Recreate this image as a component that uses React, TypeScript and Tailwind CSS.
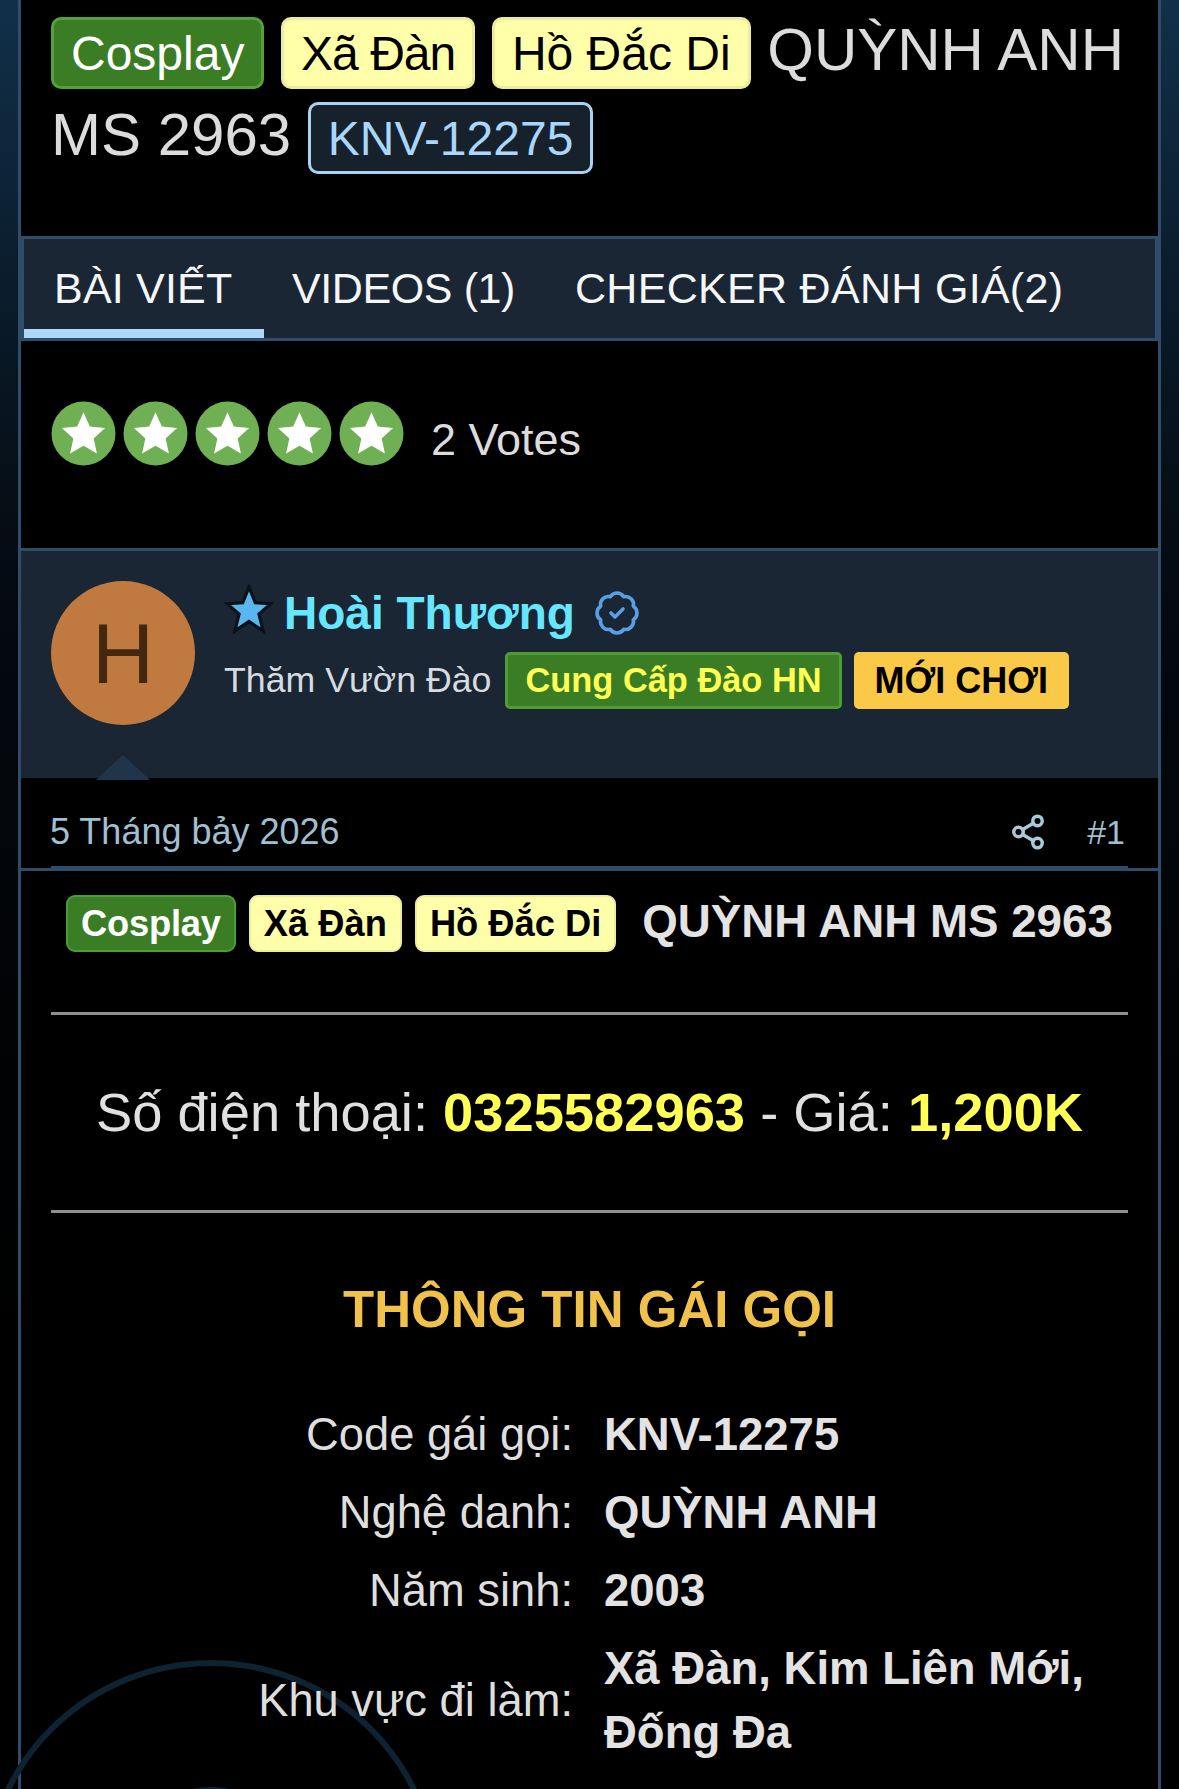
import { BadgeCheck, Share2 } from 'lucide-react';

const titleBadge = 'inline-block h-[72px] rounded-[10px] border-[3px] px-[17px] pt-[2px] align-middle text-[48px] leading-[64px] -translate-y-[1px]';
const postBadge = 'inline-block h-[57px] rounded-[9px] border-[2px] px-[13px] align-middle text-[36.3px] font-bold leading-[53px]';

function RatingStar() {
  return (
    <svg viewBox="0 0 64 64" className="h-[65px] w-[65px]">
      <circle cx="32" cy="32" r="31.5" fill="#70b054" />
      <path d="M32 11l6.2 14 15.1 1.6-11.3 10.2 3.2 14.9L32 44.1l-13.2 7.6L22 36.8 10.7 26.6 25.8 25z" fill="#ffffff" />
    </svg>
  );
}

function InfoRow({ label, children }: { label: string; children: React.ReactNode }) {
  return (
    <div className="flex items-center py-[7px]">
      <div className="w-[553px] pr-[31px] text-right text-[45.3px] text-[#dedede]">{label}</div>
      <div className="w-[480px] font-bold text-[#e3e3e3]">{children}</div>
    </div>
  );
}

export default function App() {
  return (
    <div className="relative flex h-[1789px] w-[1179px] overflow-hidden bg-black font-['Liberation_Sans',Arial,sans-serif]">
      <div className="h-full w-[18px] shrink-0 bg-gradient-to-b from-[#11304a] via-[#050c13] via-30% to-black" />
      <div className="relative flex h-full w-[1143px] shrink-0 flex-col border-x-[3px] border-[#2f4d6b]">
        {/* background rings */}
        <div className="absolute left-[-39px] top-[1660px] h-[458px] w-[458px] rounded-full border-[6px] border-[#0d2331]" />
        <div className="absolute left-[100px] top-[1787px] h-[180px] w-[180px] rounded-full border-[4px] border-[#0d2331]" />

        <h1 className="relative m-0 h-[236px] shrink-0 px-[30px] pt-[7px] text-[60px] font-normal leading-[85px] text-[#dcdcdc]">
          <span className={`${titleBadge} border-[#55a23a] bg-[#3a7d25] text-white`}>Cosplay</span>{' '}
          <span className={`${titleBadge} border-[#ecec9c] bg-[#ffffaa] tracking-[-1px] text-black`}>Xã Đàn</span>{' '}
          <span className={`${titleBadge} border-[#ecec9c] bg-[#ffffaa] text-black`}>Hồ Đắc Di</span>{' '}
          <span>QUỲNH ANH</span> <span>MS 2963</span>{' '}
          <span className={`${titleBadge} border-[#a9d3f2] bg-[#17212c] text-[#a9d6fa]`}>KNV-12275</span>
        </h1>

        <div className="relative flex h-[105px] shrink-0 border-[3px] border-[#2f4d6b] bg-[#1a2633] text-[43px] leading-[98px] text-[#f4f6f8]">
          <div className="h-[99px] w-[240px] border-b-[9px] border-[#aed8fa] pl-[30px] tracking-[0.2px]">BÀI VIẾT</div>
          <div className="w-[311px] pl-[28px] tracking-[-0.4px]">VIDEOS (1)</div>
          <div className="tracking-[0.3px]">CHECKER ĐÁNH GIÁ(2)</div>
        </div>

        <div className="relative flex h-[207px] shrink-0 items-center px-[30px] pb-[22px]">
          <div className="flex gap-[7px]">
            <RatingStar />
            <RatingStar />
            <RatingStar />
            <RatingStar />
            <RatingStar />
          </div>
          <span className="ml-[27px] mt-[12px] text-[45px] text-[#dcdcdc]">2 Votes</span>
        </div>

        <div className="relative flex h-[230px] shrink-0 gap-[29px] border-t-[3px] border-[#2f4d6b] bg-[#1a2633] pl-[30px] pt-[30px]">
          <div className="flex h-[144px] w-[144px] shrink-0 items-center justify-center rounded-full bg-[#c07a40] text-[86px] text-[#43270f]">H</div>
          <div>
            <div className="mt-[3px] flex h-[58px] items-center text-[46px] font-bold text-[#66e6ff]">
              <svg viewBox="0 0 48 48" className="mr-[10px] h-[52px] w-[50px] -translate-y-[3px]">
                <path d="M24 2l6 15 15 1-11.5 10 4 16L24 35l-13.5 9 4-16L3 18l15-1z" fill="#5ab6ee" stroke="#0b1118" strokeWidth="3" strokeLinejoin="miter" />
              </svg>
              <span>Hoài Thương</span>
              <BadgeCheck className="ml-[18px] h-[48px] w-[48px] text-[#5a9ee6]" strokeWidth={1.8} />
            </div>
            <div className="mt-[10px] flex items-center text-[35.7px] text-[#d6dbe0]">
              <span>Thăm Vườn Đào</span>
              <span className="ml-[14px] h-[57px] rounded-[5px] border-[3px] border-[#4c9e34] bg-[#3a7d25] px-[17px] text-[34.4px] font-bold leading-[51px] text-[#ffff55]">Cung Cấp Đào HN</span>
              <span className="ml-[12px] h-[57px] rounded-[5px] bg-[#fbc948] px-[21px] text-[36px] font-bold leading-[57px] text-black">MỚI CHƠI</span>
            </div>
          </div>
          <div className="absolute bottom-[-2px] left-[75px] h-0 w-0 border-x-[27px] border-b-[25px] border-x-transparent border-b-[#20354a]" />
        </div>

        <div className="relative flex h-[93px] shrink-0 items-center justify-between border-b-[3px] border-[#2f4d6b] pl-[29px] pr-[33px] pt-[18px] text-[36px] text-[#a0bfd0]">
          <span>5 Tháng bảy 2026</span>
          <span className="flex items-center gap-[40px]">
            <Share2 className="h-[38px] w-[38px] text-[#a9c9d9]" strokeWidth={2.2} />
            <span className="text-[34px]">#1</span>
          </span>
          <div className="absolute bottom-[-3px] left-[30px] right-[30px] h-[5px] bg-[#2f4d6b]" />
        </div>

        <div className="relative px-[30px] text-[#e3e3e3]">
          <div className="flex h-[141px] items-start pl-[15px] pt-[24px]">
            <span className={`${postBadge} border-[#4c9e34] bg-[#3a7d25] tracking-[-0.2px] text-white`}>Cosplay</span>
            <span className={`${postBadge} ml-[13px] border-[#ecec9c] bg-[#ffffaa] text-black`}>Xã Đàn</span>
            <span className={`${postBadge} ml-[13px] border-[#ecec9c] bg-[#ffffaa] text-black`}>Hồ Đắc Di</span>
            <span className="ml-[26px] mt-[2px] text-[45.7px] font-bold leading-[50px]">QUỲNH ANH MS 2963</span>
          </div>
          <div className="h-[3px] bg-[#8e8e8e]" />
          <div className="flex h-[195px] items-center justify-center text-[54.3px] text-[#e0e0e0]">
            <span>Số điện thoại: <b className="text-[#ffff55]">0325582963</b> - Giá: <b className="text-[#ffff55]">1,200K</b></span>
          </div>
          <div className="h-[3px] bg-[#8e8e8e]" />
          <div className="mt-[68px] text-center text-[51px] font-bold leading-[58px] text-[#f0c24c]">THÔNG TIN GÁI GỌI</div>
          <div className="mt-[57px] text-[45.5px] leading-[64px]">
            <InfoRow label="Code gái gọi:">KNV-12275</InfoRow>
            <InfoRow label="Nghệ danh:">QUỲNH ANH</InfoRow>
            <InfoRow label="Năm sinh:">2003</InfoRow>
            <InfoRow label="Khu vực đi làm:">Xã Đàn, Kim Liên Mới, Đống Đa</InfoRow>
          </div>
        </div>
      </div>
      <div className="h-full flex-1 bg-gradient-to-b from-[#11304a] via-[#050c13] via-30% to-black" />
    </div>
  );
}
